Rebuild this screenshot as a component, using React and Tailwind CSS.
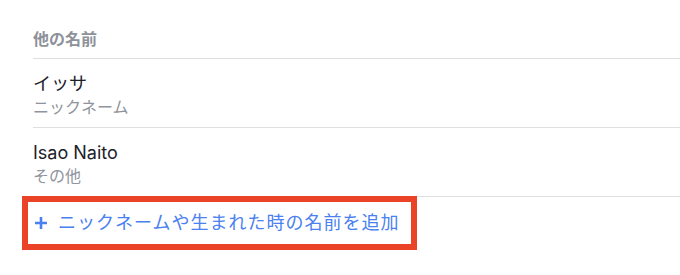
import React from "react";

const names = [
  { name: "イッサ", type: "ニックネーム" },
  { name: "Isao Naito", type: "その他" },
];

export default function App() {
  return (
    <div
      className="w-[680px] h-[275px] bg-white overflow-hidden pl-[33px] pt-[29px]"
      style={{ fontFamily: 'Inter, "Noto Sans CJK JP", sans-serif' }}
    >
      {/* Section title */}
      <div className="text-[16px] leading-[20px] font-bold text-[#8d9199]">
        他の名前
      </div>

      {/* Names */}
      <div className="mt-[9px] border-t border-[#dddfe2]">
        {names.map((n, idx) => (
          <div
            key={idx}
            className="h-[69px] border-b border-[#dddfe2] pt-[13px]"
          >
            <div className="text-[18px] leading-[24px] text-[#1d2129]">
              {n.name}
            </div>
            <div className="mt-[1px] text-[16px] leading-[20px] text-[#90949c]">
              {n.type}
            </div>
          </div>
        ))}
      </div>

      {/* Add link (highlighted) */}
      <div className="-ml-[11px] -mt-[1px] w-[395px] h-[54px] border-[6px] border-[#ea4328] flex items-center pl-[6px]">
        <a
          href="#"
          className="flex items-center text-[18px] leading-[24px] tracking-[1px] text-[#4a80f0]"
        >
          <svg width="14" height="14" viewBox="0 0 14 14" className="mr-[10px]">
            <path
              d="M7 1v12M1 7h12"
              stroke="currentColor"
              strokeWidth="2.6"
              strokeLinecap="butt"
            />
          </svg>
          ニックネームや生まれた時の名前を追加
        </a>
      </div>
    </div>
  );
}
